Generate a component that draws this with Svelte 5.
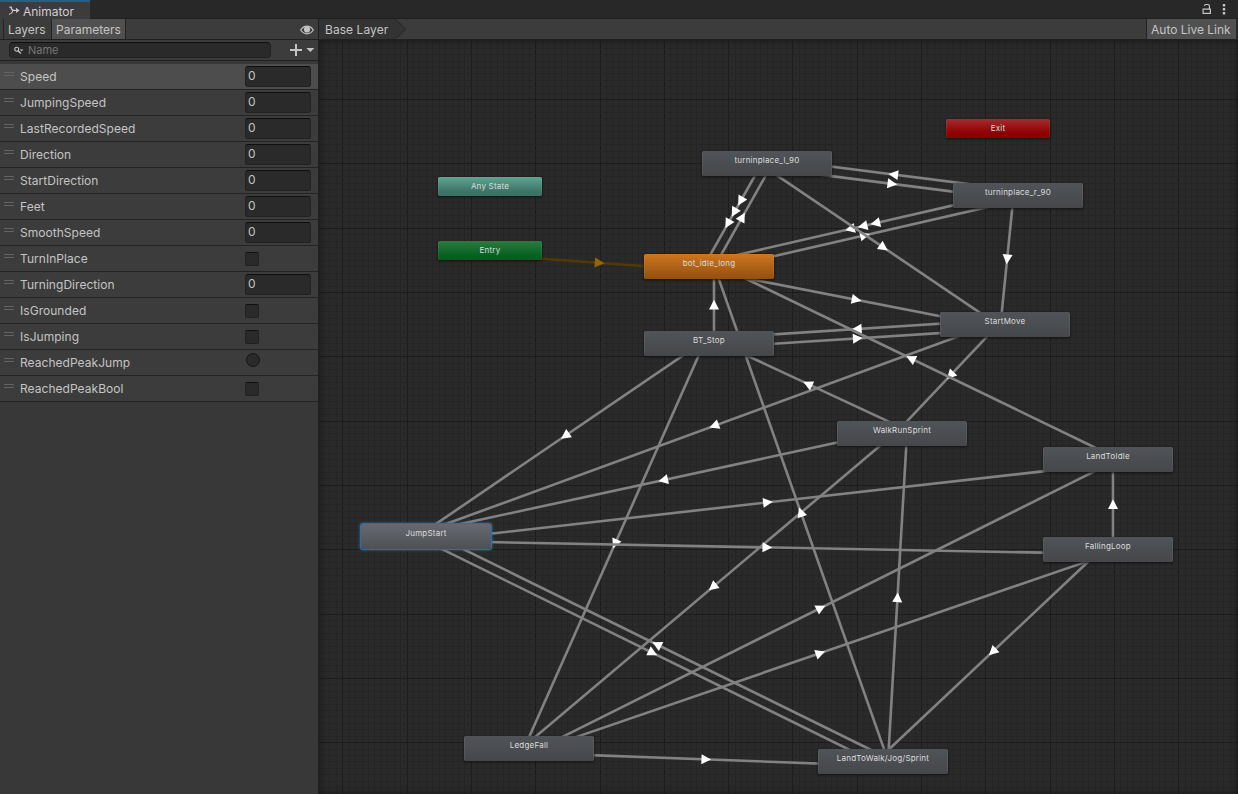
<script>
  const params = [
    ['Speed', 'float'], ['JumpingSpeed', 'float'], ['LastRecordedSpeed', 'float'],
    ['Direction', 'float'], ['StartDirection', 'float'], ['Feet', 'float'],
    ['SmoothSpeed', 'float'], ['TurnInPlace', 'bool'], ['TurningDirection', 'float'],
    ['IsGrounded', 'bool'], ['IsJumping', 'bool'], ['ReachedPeakJump', 'trigger'],
    ['ReachedPeakBool', 'bool']
  ];

  // Graph origin inside the window
  const OX = 319, OY = 40, W = 919, H = 754;

  // Node centres, label and kind
  const nodes = {
    exit: { x: 998, y: 128.5, label: 'Exit', kind: 'exit' },
    any: { x: 490, y: 186.5, label: 'Any State', kind: 'any' },
    entry: { x: 490, y: 250.5, label: 'Entry', kind: 'entry' },
    tl: { x: 767, y: 163.5, label: 'turninplace_l_90', kind: 'state' },
    tr: { x: 1018, y: 195.5, label: 'turninplace_r_90', kind: 'state' },
    bot: { x: 709, y: 266.5, label: 'bot_idle_long', kind: 'default' },
    start: { x: 1005, y: 324.5, label: 'StartMove', kind: 'state' },
    stop: { x: 709, y: 343.5, label: 'BT_Stop', kind: 'state' },
    walk: { x: 902, y: 433.5, label: 'WalkRunSprint', kind: 'state' },
    idle: { x: 1108, y: 459.5, label: 'LandToIdle', kind: 'state' },
    jump: { x: 426, y: 536.5, label: 'JumpStart', kind: 'state selected' },
    fall: { x: 1108, y: 549.5, label: 'FallingLoop', kind: 'state' },
    ledge: { x: 529, y: 748.5, label: 'LedgeFall', kind: 'state' },
    land: { x: 883, y: 761.5, label: 'LandToWalk/Jog/Sprint', kind: 'state' }
  };
  const boxes = Object.values(nodes).map((n) => {
    const small = ['exit', 'any', 'entry'].includes(n.kind);
    const w = small ? 104 : 130, h = small ? 19 : 25;
    return { ...n, w, h, left: n.x - OX - w / 2, top: n.y - OY - h / 2 };
  });

  // from, to, number of transitions
  const links = [
    ['entry', 'bot', 1], ['stop', 'bot', 1], ['stop', 'start', 1], ['stop', 'jump', 1],
    ['stop', 'ledge', 1], ['start', 'stop', 1], ['bot', 'start', 1], ['bot', 'tl', 1],
    ['bot', 'tr', 1], ['tl', 'bot', 3], ['tr', 'bot', 3], ['tr', 'tl', 1],
    ['tl', 'tr', 1], ['tl', 'start', 1], ['tr', 'start', 1], ['start', 'walk', 1],
    ['start', 'jump', 1], ['idle', 'bot', 1], ['walk', 'stop', 1], ['walk', 'jump', 1],
    ['walk', 'ledge', 1], ['jump', 'idle', 1], ['jump', 'fall', 1], ['ledge', 'idle', 1],
    ['ledge', 'fall', 1], ['ledge', 'land', 1], ['jump', 'land', 1], ['land', 'jump', 1],
    ['land', 'bot', 1], ['land', 'walk', 1], ['fall', 'land', 1], ['fall', 'idle', 1]
  ];

  const edges = links.map(([from, to, count]) => {
    const a = nodes[from], b = nodes[to];
    const len = Math.hypot(b.x - a.x, b.y - a.y);
    const ux = (b.x - a.x) / len, uy = (b.y - a.y) / len;
    const ox = -uy * 4.7 + 0.3, oy = ux * 4.7 - 0.3;
    const mx = (a.x + b.x) / 2 + ox, my = (a.y + b.y) / 2 + oy;
    const arrows = [];
    for (let i = 0; i < count; i++) {
      const s = (i - (count - 1) / 2) * 13;
      const cx = mx + ux * s, cy = my + uy * s;
      const p = (f, r) => `${(cx + ux * f - uy * r).toFixed(2)},${(cy + uy * f + ux * r).toFixed(2)}`;
      arrows.push(`${p(5, 0)} ${p(-4.7, 5)} ${p(-4.7, -5)}`);
    }
    return {
      x1: a.x + ox, y1: a.y + oy, x2: b.x + ox, y2: b.y + oy,
      arrows, entry: from === 'entry'
    };
  });

  const steps = (first, limit) => {
    const out = [];
    for (let k = -9; first + k * 6.43 < limit; k++) {
      out.push({ at: Math.round(first + k * 6.43), major: k % 10 === 0 });
    }
    return out;
  };
  const cols = steps(342.3, 1238);
  const rows = steps(99.1, 794);
</script>

<div class="window">
  <header class="tabs">
    <div class="tab">
      <svg width="13" height="12" viewBox="0 0 13 12" fill="none" stroke="#c8c8c8" stroke-width="1.3">
        <path d="M3 2 Q3.2 5.2 6 5.4 H9 M1.2 9.4 Q4 8.6 5 5.6" />
        <path d="M8 2.8 L11.6 5.4 L8 8Z" fill="#c8c8c8" stroke="none" />
        <path d="M1.4 2.2 H4" />
      </svg>
      <span>Animator</span>
    </div>
    <div class="tools">
      <svg width="10" height="12" viewBox="0 0 10 12" fill="none" stroke="#c4c4c4" stroke-width="1.2">
        <path d="M1.1 6.1 H8.4 V10.4 H1.1Z M2.5 3 Q2.5 1.5 4 1.5 H5.9 Q7.4 1.5 7.4 3 V6" />
      </svg>
      <svg width="4" height="12" viewBox="0 0 4 12" fill="#c4c4c4">
        <path d="M.8 1h2.4v2.4H.8z M.8 5h2.4v2.4H.8z M.8 9h2.4v2.4H.8z" />
      </svg>
    </div>
  </header>

  <div class="body">
    <aside>
      <div class="modes">
        <span class="mode layers">Layers</span>
        <span class="mode on">Parameters</span>
        <svg class="eye" width="14" height="10" viewBox="0 0 14 10">
          <path d="M.7 5 Q3.2 1.2 7 1.2 T13.3 5 Q10.8 8.8 7 8.8 T.7 5Z" fill="none" stroke="#c4c4c4" stroke-width="1.2" />
          <circle cx="7" cy="4.5" r="3.1" fill="#c4c4c4" />
        </svg>
      </div>
      <div class="find">
        <div class="search">
          <svg width="11" height="9" viewBox="0 0 11 9">
            <circle cx="2.7" cy="3.2" r="2" fill="none" stroke="#c4c4c4" stroke-width="1.1" />
            <path d="M4.2 4.8 L6.8 7.6" stroke="#c4c4c4" stroke-width="1.4" />
            <path d="M5.8 3.4 H9.4 L7.6 5.3Z" fill="#c4c4c4" />
          </svg>
          <span>Name</span>
        </div>
        <svg class="add" width="25" height="13" viewBox="0 0 25 13" fill="#c4c4c4">
          <path d="M5 1h2v5h5v2H7v5H5V8H0V6h5z M16.3 5h8L20.3 9z" />
        </svg>
      </div>
      <ul>
        {#each params as [name, type], i}
          <li class:active={i === 0}>
            <i class="grip"></i>
            <span class="name">{name}</span>
            {#if type === 'float'}
              <span class="field">0</span>
            {:else}
              <span class={type}></span>
            {/if}
          </li>
        {/each}
      </ul>
    </aside>

    <main>
      <div class="crumbs">
        <span class="crumb">Base Layer</span>
        <svg width="12" height="20" viewBox="0 0 12 20">
          <path d="M0 0 L10.3 10 L0 20Z" fill="#333" />
          <path d="M.3 0 L10.6 10 L.3 20" fill="none" stroke="#232323" />
        </svg>
        <span class="live">Auto Live Link</span>
      </div>
      <div class="graph">
        <svg width={W} height={H} viewBox="{OX} {OY} {W} {H}">
          {#each cols as c}
            <rect x={c.at} y={OY} width="1" height={H} class:major={c.major} class="minor" />
          {/each}
          {#each rows as r}
            <rect x={OX} y={r.at} width={W} height="1" class:major={r.major} class="minor" />
          {/each}
          {#each edges as e}
            <g class:entry={e.entry} class="edge">
              <line x1={e.x1} y1={e.y1} x2={e.x2} y2={e.y2} />
              {#each e.arrows as points}
                <polygon {points} />
              {/each}
            </g>
          {/each}
        </svg>
        <div class="shade"></div>
        {#each boxes as n}
          <div class="node {n.kind}" style="left:{n.left}px;top:{n.top}px;width:{n.w}px;height:{n.h}px">{n.label}</div>
        {/each}
      </div>
    </main>
  </div>
</div>

<style>
  :global(body) { background: #282828; overflow: hidden; }
  .window {
    width: 1238px; height: 794px; display: flex; flex-direction: column;
    box-sizing: border-box; overflow: hidden;
    font: 12px/14px Inter, sans-serif; color: #c4c4c4; background: #282828;
  }
  .tabs { height: 19px; display: flex; justify-content: space-between; box-shadow: inset 0 -1px #202020; }
  .tab {
    width: 90px; box-sizing: border-box; border-top: 2px solid #2c5d87; background: #3c3c3c;
    display: flex; align-items: center; gap: 2px; padding: 0 0 0 8px; color: #d0d0d0;
  }
  .tab span { padding-top: 2px; }
  .tools { display: flex; gap: 10px; padding: 3px 12px 0 0; }
  .body { display: flex; flex: 1; min-height: 0; }
  aside { width: 318px; background: #383838; border-right: 1px solid #202020; }
  .modes { height: 20px; display: flex; background: #3c3c3c; border-bottom: 1px solid #202020; padding-left: 3px; }
  .mode { border-left: 1px solid #242424; padding: 4px 4px 0; line-height: 14px; box-sizing: border-box; }
  .mode.layers { width: 48px; }
  .mode.on { width: 75px; background: #505050; border-right: 1px solid #242424; }
  .eye { margin: 6px 4px 0 auto; }
  .find { height: 20px; display: flex; background: #3c3c3c; border-bottom: 1px solid #202020; }
  .search {
    width: 262px; height: 16px; box-sizing: border-box; margin: 2px 0 0 9px; padding-left: 4px;
    border: 1px solid #212121; border-top-color: #0f0f0f; border-radius: 4px; background: #2a2a2a;
    display: flex; align-items: center; gap: 3px; color: #757575; font-size: 11px;
  }
  .add { margin: 3px 0 0 19px; }
  ul { list-style: none; margin: 3px 0 0; padding: 0; }
  li {
    height: 26px; box-sizing: border-box; border-bottom: 1px solid #232323; background: #3c3c3c;
    display: flex; align-items: flex-start; padding-left: 4px;
  }
  li.active { background: #4d4d4d; }
  .grip { width: 10px; height: 2px; margin-top: 8px; border: solid #636363; border-width: 1px 0; }
  .name { width: 231px; padding: 6px 0 0 6px; box-sizing: border-box; flex: none; letter-spacing: .04px; }
  .field {
    width: 66px; height: 21px; box-sizing: border-box; margin-top: 2px; padding: 2px 0 0 2px;
    border: 1px solid #212121; border-top-color: #0f0f0f; border-radius: 3px; background: #2a2a2a;
  }
  .bool {
    width: 14px; height: 14px; box-sizing: border-box; margin-top: 6px;
    border: 1px solid #212121; border-top-color: #0f0f0f; border-radius: 2px; background: #2a2a2a;
  }
  .trigger {
    width: 14px; height: 14px; box-sizing: border-box; margin: 3px 0 0 1px;
    border: 1px solid #151515; border-radius: 50%; background: #2a2a2a;
  }
  main { flex: 1; display: flex; flex-direction: column; min-width: 0; }
  .crumbs { height: 20px; display: flex; background: #3c3c3c; border-bottom: 1px solid #202020; margin-right: 2px; }
  .crumb { background: #333; padding: 4px 6px 0; width: 64px; white-space: nowrap; letter-spacing: .06px; }
  .live { margin-left: auto; width: 90px; box-sizing: border-box; border-left: 1px solid #242424; background: #505050; padding: 4px 0 0 4px; white-space: nowrap; }
  .graph { position: relative; flex: 1; overflow: hidden; background: #2a2a2a; }
  .graph > svg { display: block; }
  .minor { fill: #252525; }
  .major { fill: #1c1c1c; }
  .edge line { stroke: #828282; stroke-width: 2.6; }
  .edge polygon { fill: #fff; }
  .edge.entry line { stroke: #523804; }
  .edge.entry polygon { fill: #956500; }
  .shade { position: absolute; inset: 0; box-shadow: inset 0 0 7px #151515; }
  .node {
    position: absolute; box-sizing: border-box; padding-top: 4px;
    border-radius: 2px; text-align: center; font-size: 8px; line-height: 10px; letter-spacing: .21px;
    color: #dcdcdc; background: linear-gradient(#505357, #45474b); white-space: nowrap;
    box-shadow: 0 1px 3px #111, inset 1px 0 #ffffff12, inset -1px 0 #ffffff12;
  }
  .exit { background: linear-gradient(#a52b2f, #8e0000 75%); }
  .any { background: linear-gradient(#5fa591, #3c7166 80%); }
  .node.entry { background: linear-gradient(#2c7b3e, #03601f 80%); }
  .default { background: linear-gradient(#cd761f, #93500e); }
  .selected { background: linear-gradient(#66696f, #4d5054); box-shadow: 0 0 0 1px #2e6da8, 0 0 3px 1px #2e6da8; }
</style>
